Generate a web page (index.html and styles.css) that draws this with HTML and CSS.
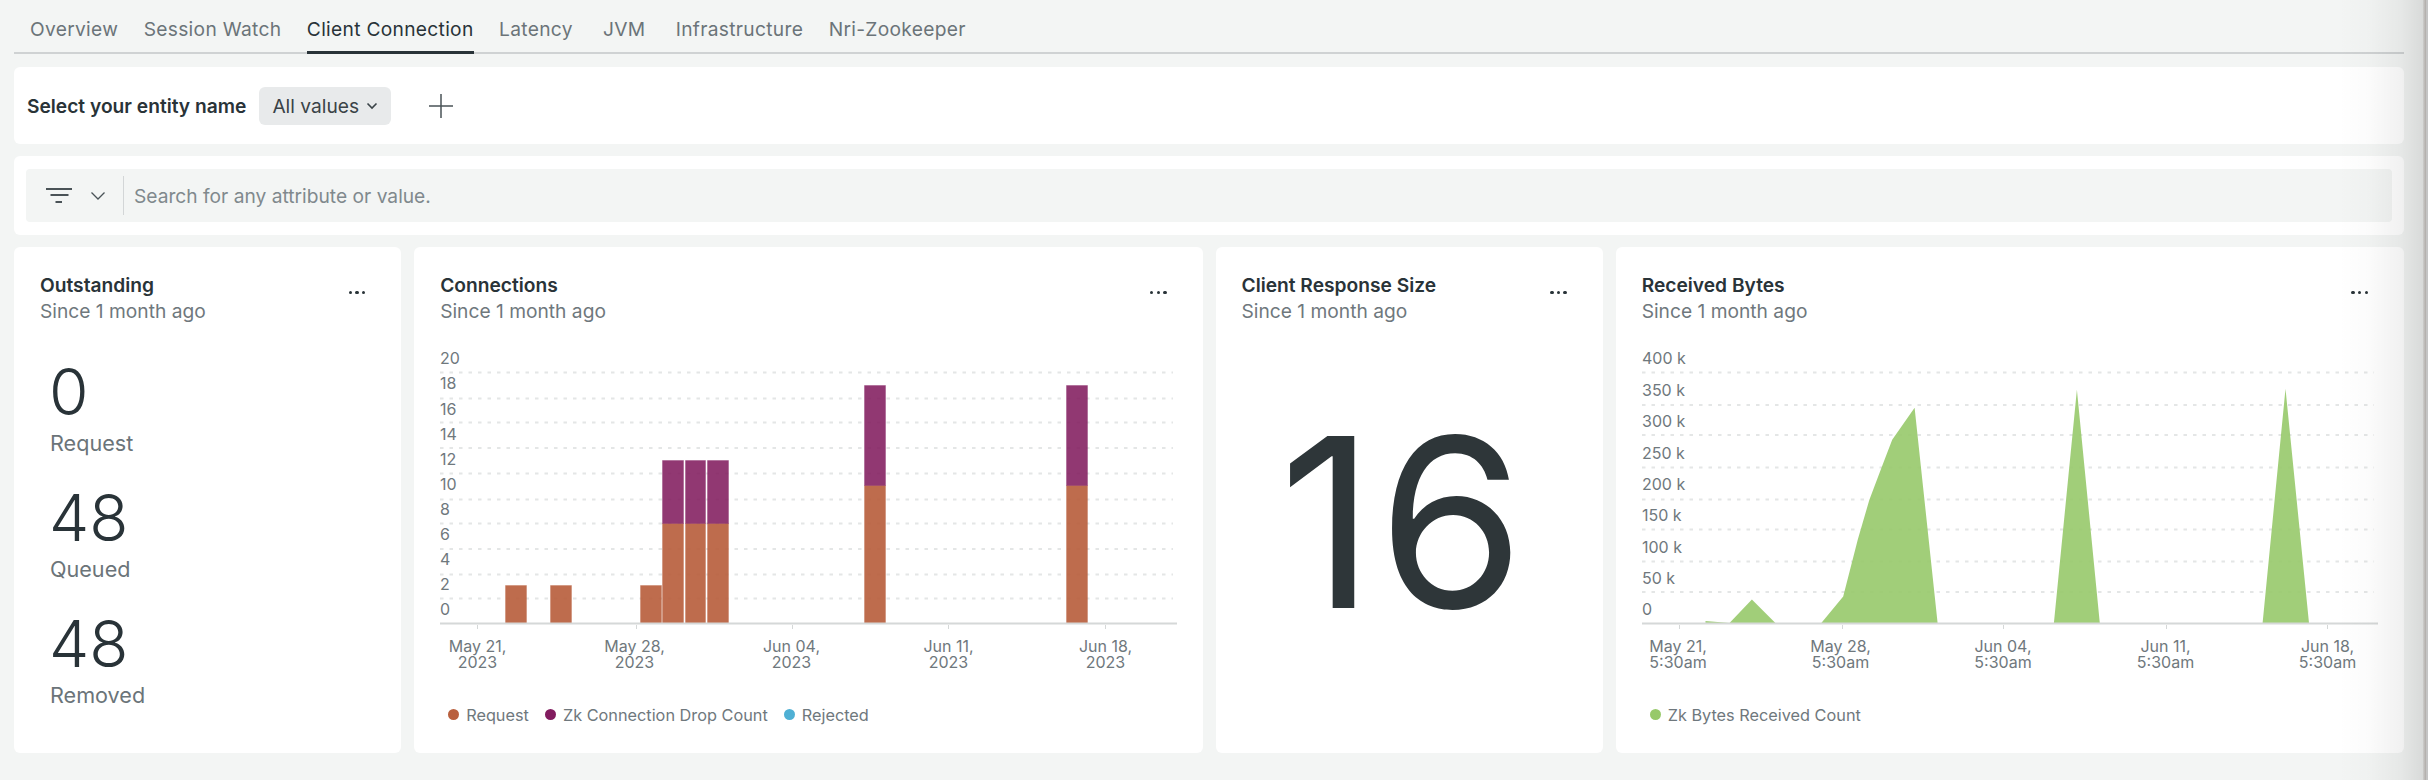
FILE: index.html
```html
<!DOCTYPE html>
<html lang="en">
<head>
<meta charset="utf-8">
<title>Client Connection</title>
<link rel="stylesheet" href="styles.css">
</head>
<body>
<div class="page">
  <nav class="tabs">
    <a class="tab">Overview</a>
    <a class="tab">Session Watch</a>
    <a class="tab active">Client Connection</a>
    <a class="tab">Latency</a>
    <a class="tab tab-min">JVM</a>
    <a class="tab">Infrastructure</a>
    <a class="tab">Nri-Zookeeper</a>
  </nav>

  <section class="panel var-panel">
    <span class="var-label">Select your entity name</span>
    <button class="chip">All values
      <svg class="chip-chevron" viewBox="0 0 12 8"><path d="M1.5 1.5 6 6l4.5-4.5"/></svg>
    </button>
    <svg class="plus" viewBox="0 0 24 24"><path d="M12 0v24M0 12h24"/></svg>
  </section>

  <section class="panel search-panel">
    <div class="search">
      <svg class="filter-icon" viewBox="0 0 26 16"><path d="M0 1h26M4.500 7h18M9.500 14h6.500"/></svg>
      <svg class="filter-chevron" viewBox="0 0 14 8"><path d="M.5.500 7 7 13.500.5"/></svg>
      <span class="search-divider"></span>
      <span class="placeholder">Search for any attribute or value.</span>
    </div>
  </section>

  <main class="grid">
    <article class="card">
      <header class="card-head">
        <div><h2 class="title">Outstanding</h2><p class="since">Since 1 month ago</p></div>
        <span class="dots"><i></i><i></i><i></i></span>
      </header>
      <div class="stats">
        <div class="stat"><div class="stat-value">0</div><div class="stat-label">Request</div></div>
        <div class="stat"><div class="stat-value">48</div><div class="stat-label">Queued</div></div>
        <div class="stat"><div class="stat-value">48</div><div class="stat-label">Removed</div></div>
      </div>
    </article>

    <article class="card">
      <header class="card-head">
        <div><h2 class="title">Connections</h2><p class="since">Since 1 month ago</p></div>
        <span class="dots"><i></i><i></i><i></i></span>
      </header>
      <svg class="chart" viewBox="440 345 740 340" width="740" height="340">
        <path class="grid-line" d="M440 372.500H1173M440 398.500H1173M440 422.500H1173M440 448H1173M440 473.500H1173M440 499.500H1173M440 523.500H1173M440 549H1173M440 574.500H1173M440 598.500H1173"/>
        <g class="axis-text">
          <text x="440" y="364.300">20</text><text x="440" y="389.400">18</text><text x="440" y="415.200">16</text><text x="440" y="440.400">14</text><text x="440" y="465.200">12</text><text x="440" y="490.300">10</text><text x="440" y="515.100">8</text><text x="440" y="540.200">6</text><text x="440" y="565">4</text><text x="440" y="590.200">2</text><text x="440" y="615.300">0</text>
        </g>
        <g class="bars-orange">
          <rect x="505.500" y="585.500" width="21" height="38"/>
          <rect x="550.500" y="585.500" width="21" height="38"/>
          <rect x="640.500" y="585.500" width="21" height="38"/>
          <rect x="662.500" y="523.500" width="21" height="100"/>
          <rect x="685.500" y="523.500" width="20" height="100"/>
          <rect x="707.500" y="523.500" width="21" height="100"/>
          <rect x="864.500" y="485.500" width="21" height="138"/>
          <rect x="1066.500" y="485.500" width="21" height="138"/>
        </g>
        <g class="bars-purple">
          <rect x="662.500" y="460.500" width="21" height="63"/>
          <rect x="685.500" y="460.500" width="20" height="63"/>
          <rect x="707.500" y="460.500" width="21" height="63"/>
          <rect x="864.500" y="385.500" width="21" height="100"/>
          <rect x="1066.500" y="385.500" width="21" height="100"/>
        </g>
        <path class="axis-line" d="M440 623.500H1177"/>
        <path class="tick" d="M477.500 625v4M636.500 625v4M792.500 625v4M948.500 625v4M1105.500 625v4"/>
        <g class="axis-text mid">
          <text x="477.500" y="652">May 21,</text><text x="477.500" y="668">2023</text>
          <text x="634.500" y="652">May 28,</text><text x="634.500" y="668">2023</text>
          <text x="791.500" y="652">Jun 04,</text><text x="791.500" y="668">2023</text>
          <text x="948.500" y="652">Jun 11,</text><text x="948.500" y="668">2023</text>
          <text x="1105.500" y="652">Jun 18,</text><text x="1105.500" y="668">2023</text>
        </g>
      </svg>
      <ul class="legend">
        <li><i class="dot dot-orange"></i>Request</li>
        <li><i class="dot dot-purple"></i>Zk Connection Drop Count</li>
        <li><i class="dot dot-blue"></i>Rejected</li>
      </ul>
    </article>

    <article class="card">
      <header class="card-head">
        <div><h2 class="title">Client Response Size</h2><p class="since">Since 1 month ago</p></div>
        <span class="dots"><i></i><i></i><i></i></span>
      </header>
      <div class="billboard">16</div>
    </article>

    <article class="card">
      <header class="card-head">
        <div><h2 class="title">Received Bytes</h2><p class="since">Since 1 month ago</p></div>
        <span class="dots"><i></i><i></i><i></i></span>
      </header>
      <svg class="chart" viewBox="1642 345 740 340" width="740" height="340">
        <path class="grid-line" d="M1642 372.500H2374M1642 405H2374M1642 435H2374M1642 467.500H2374M1642 499.500H2374M1642 529.500H2374M1642 561.500H2374M1642 592H2374"/>
        <g class="axis-text">
          <text x="1642" y="364.300">400 k</text><text x="1642" y="396.300">350 k</text><text x="1642" y="427.300">300 k</text><text x="1642" y="459.300">250 k</text><text x="1642" y="490.300">200 k</text><text x="1642" y="521.300">150 k</text><text x="1642" y="553.300">100 k</text><text x="1642" y="584.300">50 k</text><text x="1642" y="615.300">0</text>
        </g>
        <path class="area" d="M1705.500 623V620.900L1729.500 623L1751.900 599.500L1775.400 623H1821.300L1843.200 596.400L1857.800 539.600L1869.300 500L1881 469L1892.200 439.700L1914.600 407.700L1937.600 623H2053.900L2076.900 389.800L2099.800 623H2262.600L2285.500 388.800L2309 623Z"/>
        <path class="axis-line" d="M1642 623.500H2378"/>
        <path class="tick" d="M1679.500 625v4M1842.500 625v4M2003.500 625v4M2166.500 625v4M2327.500 625v4"/>
        <g class="axis-text mid">
          <text x="1678" y="652">May 21,</text><text x="1678" y="668">5:30am</text>
          <text x="1840.500" y="652">May 28,</text><text x="1840.500" y="668">5:30am</text>
          <text x="2003" y="652">Jun 04,</text><text x="2003" y="668">5:30am</text>
          <text x="2165.500" y="652">Jun 11,</text><text x="2165.500" y="668">5:30am</text>
          <text x="2327.500" y="652">Jun 18,</text><text x="2327.500" y="668">5:30am</text>
        </g>
      </svg>
      <ul class="legend">
        <li><i class="dot dot-green"></i>Zk Bytes Received Count</li>
      </ul>
    </article>
  </main>
</div>
<div class="drawer-shadow"></div>
</body>
</html>
```

FILE: styles.css
```css
* { box-sizing: border-box; }
html, body { margin: 0; height: 100%; }
body {
  background: #f3f5f4;
  font-family: Inter, "Liberation Sans", sans-serif;
  color: #293338;
  overflow: hidden;
}
.page { padding: 0 24px 0 14px; }

.tabs {
  display: flex;
  gap: 25.500px;
  height: 54px;
  padding-left: 16px;
  border-bottom: 2px solid #cfd2d3;
}
.tab {
  height: 54px;
  line-height: 58px;
  font-size: 19.200px;
  letter-spacing: .3px;
  color: #6b7479;
  white-space: nowrap;
  text-align: center;
}
.tab-min { min-width: 52px; }
.tab.active { color: #293338; border-bottom: 3px solid #293338; }

.panel { background: #fff; border-radius: 6px; }
.var-panel {
  display: flex;
  align-items: center;
  height: 77px;
  margin-top: 13px;
  padding: 0 13px;
}
.var-label { font-size: 19.200px; font-weight: 600; color: #293338; }
.chip {
  display: flex;
  align-items: center;
  gap: 7px;
  height: 38px;
  margin-left: 13px;
  padding: 0 13px;
  border: 0;
  border-radius: 6px;
  background: #e8eaeb;
  font: 400 19.200px Inter, "Liberation Sans", sans-serif;
  color: #3a4347;
}
.chip-chevron { width: 12px; height: 8px; fill: none; stroke: #3a4347; stroke-width: 1.600; }
.plus { width: 24px; height: 24px; margin-left: 38px; fill: none; stroke: #4a5357; stroke-width: 1.500; }

.search-panel { height: 79px; margin-top: 12px; padding: 13px 12px; }
.search {
  display: flex;
  align-items: center;
  height: 53px;
  padding-left: 20px;
  border-radius: 4px;
  background: #f3f5f4;
}
.filter-icon { width: 26px; height: 16px; fill: none; stroke: #4a5357; stroke-width: 2; }
.filter-chevron { width: 14px; height: 8px; margin-left: 19px; fill: none; stroke: #4a5357; stroke-width: 1.300; }
.search-divider { width: 1px; height: 39px; margin-left: 18px; background: #d3d6d7; }
.placeholder { margin-left: 10px; font-size: 19.200px; color: #80898d; }

.grid {
  display: grid;
  grid-template-columns: 387fr 788fr 387fr 788fr;
  gap: 13px;
  height: 506px;
  margin-top: 12px;
}
.card {
  display: flex;
  flex-direction: column;
  min-width: 0;
  background: #fff;
  border-radius: 6px;
}
.card-head {
  display: flex;
  justify-content: space-between;
  padding: 27px 36px 0 26px;
}
.title { margin: 0 0 2px; font-size: 19.200px; line-height: 22px; font-weight: 600; color: #293338; }
.since { margin: 0; font-size: 19.200px; line-height: 26px; color: #6f787d; }
.dots { display: flex; gap: 3.200px; margin-top: 17px; height: 3.400px; }
.dots i { width: 3.400px; height: 3.400px; border-radius: 50%; background: #293338; }

.stats { padding: 32px 0 0 36px; }
.stat + .stat { margin-top: 24px; }
.stat-value { margin-left: -1px; font-size: 64px; line-height: 72px; font-weight: 300; color: #293338; }
.stat-label { font-size: 21.600px; line-height: 30px; color: #6b7479; }

.billboard {
  flex: 1;
  display: flex;
  align-items: center;
  justify-content: center;
  padding: 0 12px 33px 0;
  font-size: 236px;
  letter-spacing: 3px;
  line-height: 1;
  color: #2e3639;
}

.chart { display: block; margin: 21px 0 0 26px; flex: none; }
.grid-line { fill: none; stroke: #e4e6e6; stroke-width: 2; stroke-dasharray: 3.500 6; }
.axis-line { fill: none; stroke: #d5d8d8; stroke-width: 2; }
.tick { fill: none; stroke: #d5d8d8; stroke-width: 1; }
.axis-text text { font-size: 16px; fill: #6f787d; }
.axis-text.mid text { text-anchor: middle; }
.bars-orange rect { fill: #b9603e; fill-opacity: .92; stroke: #b9603e; stroke-opacity: .3; }
.bars-purple rect { fill: #821c5f; fill-opacity: .88; stroke: #821c5f; stroke-opacity: .3; }
.area { fill: #97c96a; fill-opacity: .9; }

.legend {
  display: flex;
  gap: 16px;
  margin: 20px 0 0 34px;
  padding: 0;
  list-style: none;
  font-size: 16.300px;
  line-height: 20px;
  color: #6f787d;
}
.legend li { display: flex; align-items: center; gap: 7px; }
.dot { width: 11px; height: 11px; border-radius: 50%; margin-bottom: 2px; }
.dot-orange { background: #b9603e; }
.dot-purple { background: #821c5f; }
.dot-blue { background: #4fb0d4; }
.dot-green { background: #97c96a; }

.drawer-shadow {
  position: absolute;
  top: 0;
  right: 0;
  bottom: 0;
  width: 90px;
  pointer-events: none;
  background:
    linear-gradient(90deg, #cdcdcb, #b5b1ae 50%, #c4c4c4 60%) right / 5px 100% no-repeat,
    linear-gradient(90deg, rgba(0,0,0,0) 0, rgba(0,0,0,.015) 35%, rgba(0,0,0,.055) 70%, rgba(0,0,0,.11) 94%);
}
```
